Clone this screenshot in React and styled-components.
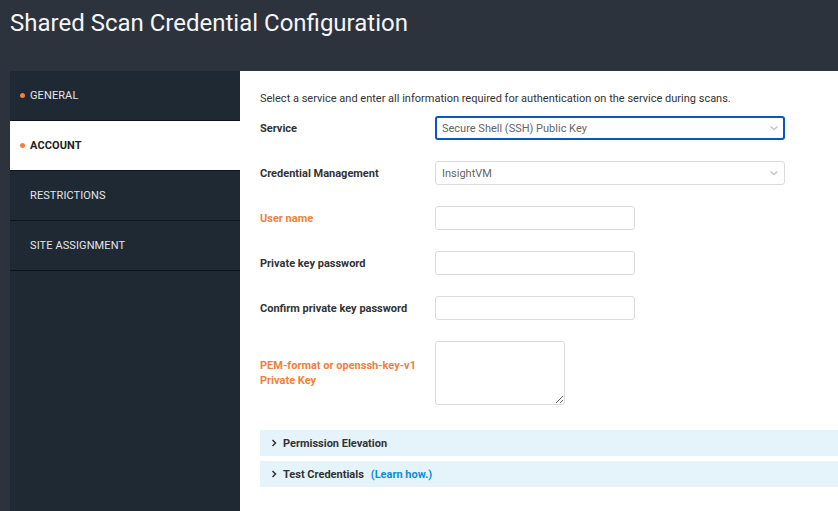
import styled, { createGlobalStyle } from 'styled-components';

const GlobalStyle = createGlobalStyle`
  html, body {
    margin: 0;
    padding: 0;
    background: #2c333c;
    font-family: Roboto, "Liberation Sans", sans-serif;
  }
  * { box-sizing: border-box; }
`;

const navItems = [
  { label: 'GENERAL', dot: true },
  { label: 'ACCOUNT', dot: true, active: true },
  { label: 'RESTRICTIONS' },
  { label: 'SITE ASSIGNMENT' },
];

const fields = [
  { label: 'User name', required: true },
  { label: 'Private key password' },
  { label: 'Confirm private key password' },
];

const Chevron = () => (
  <svg width="10" height="10" viewBox="0 0 10 10">
    <path d="M1.5 3.5 L5 6.5 L8.5 3.5" fill="none" stroke="#c4c8cc" strokeWidth="1.6" />
  </svg>
);

const Caret = () => (
  <svg width="6" height="8" viewBox="0 0 6 8">
    <path d="M1.5 1 L4.5 4 L1.5 7" fill="none" stroke="#333" strokeWidth="1.5" />
  </svg>
);

export default function App() {
  return (
    <Page>
      <GlobalStyle />
      <Header>
        <Title>Shared Scan Credential Configuration</Title>
      </Header>
      <Body>
        <Sidebar>
          {navItems.map((item) => (
            <NavItem key={item.label} $active={item.active}>
              <Dot $show={item.dot} />
              {item.label}
            </NavItem>
          ))}
        </Sidebar>
        <Content>
          <Intro>
            Select a service and enter all information required for authentication on the service during scans.
          </Intro>
          <Form>
            <Row>
              <Label>Service</Label>
              <Select $focused>
                <span>Secure Shell (SSH) Public Key</span>
                <Chevron />
              </Select>
            </Row>
            <Row>
              <Label>Credential Management</Label>
              <Select>
                <span>InsightVM</span>
                <Chevron />
              </Select>
            </Row>
            {fields.map((f) => (
              <Row key={f.label}>
                <Label $required={f.required}>{f.label}</Label>
                <TextInput />
              </Row>
            ))}
            <Row>
              <Label $required>
                PEM-format or openssh-key-v1
                <br />
                Private Key
              </Label>
              <TextArea />
            </Row>
          </Form>
          <Sections>
            <SectionBar>
              <Caret />
              Permission Elevation
            </SectionBar>
            <SectionBar>
              <Caret />
              Test Credentials
              <LearnLink>(Learn how.)</LearnLink>
            </SectionBar>
          </Sections>
        </Content>
      </Body>
    </Page>
  );
}

const Page = styled.div`
  width: 838px;
  height: 511px;
  display: flex;
  flex-direction: column;
  overflow: hidden;
  background: #2c333c;
`;

const Header = styled.header`
  flex-shrink: 0;
  height: 71px;
  padding: 8px 0 0 10px;
`;

const Title = styled.h1`
  margin: 0;
  font-size: 24px;
  font-weight: 400;
  color: #f4f5f6;
  line-height: 30px;
`;

const Body = styled.div`
  flex: 1;
  min-height: 0;
  display: flex;
  padding-left: 10px;
`;

const Sidebar = styled.nav`
  width: 230px;
  background: #1f2933;
  display: flex;
  flex-direction: column;
`;

const NavItem = styled.div`
  height: 50px;
  flex-shrink: 0;
  display: flex;
  align-items: center;
  padding-left: 10px;
  font-size: 11px;
  letter-spacing: 0.1px;
  color: ${(p) => (p.$active ? '#222' : '#e3e6e9')};
  font-weight: ${(p) => (p.$active ? 700 : 400)};
  background: ${(p) => (p.$active ? '#fff' : 'transparent')};
  border-bottom: 1px solid #0e1419;
`;

const Dot = styled.span`
  width: 5px;
  height: 5px;
  border-radius: 50%;
  margin-right: 5px;
  background: ${(p) => (p.$show ? '#f0803c' : 'transparent')};
`;

const Content = styled.main`
  flex: 1;
  background: #fff;
  padding: 21px 0 0 20px;
  display: flex;
  flex-direction: column;
`;

const Intro = styled.p`
  margin: 0 0 11px;
  font-size: 11px;
  color: #333;
  line-height: 13px;
`;

const Form = styled.div`
  display: flex;
  flex-direction: column;
  gap: 21px;
`;

const Row = styled.div`
  display: flex;
  align-items: center;
`;

const Label = styled.label`
  width: 175px;
  font-size: 11px;
  font-weight: 700;
  line-height: 15px;
  color: ${(p) => (p.$required ? '#f0803c' : '#333')};
`;

const Select = styled.div`
  width: 350px;
  height: 24px;
  border: ${(p) => (p.$focused ? '2px solid #0a56c2' : '1px solid #d9dcdf')};
  border-radius: 3px;
  display: flex;
  align-items: center;
  justify-content: space-between;
  padding: 0 ${(p) => (p.$focused ? '4px' : '5px')} 0 ${(p) => (p.$focused ? '5px' : '6px')};
  font-size: 11px;
  color: #666;
`;

const TextInput = styled.input`
  width: 200px;
  height: 24px;
  border: 1px solid #d9dcdf;
  border-radius: 3px;
  outline: none;
`;

const TextArea = styled.textarea`
  width: 130px;
  height: 64px;
  border: 1px solid #d9dcdf;
  border-radius: 3px;
  outline: none;
  resize: both;
  display: block;
`;

const Sections = styled.div`
  margin-top: 25px;
  display: flex;
  flex-direction: column;
  gap: 5px;
`;

const SectionBar = styled.div`
  height: 26px;
  background: #e5f4fb;
  display: flex;
  align-items: center;
  gap: 6px;
  padding-left: 11px;
  font-size: 11px;
  font-weight: 700;
  color: #333;
`;

const LearnLink = styled.a`
  color: #0a8fd6;
  margin-left: 1px;
  cursor: pointer;
`;
